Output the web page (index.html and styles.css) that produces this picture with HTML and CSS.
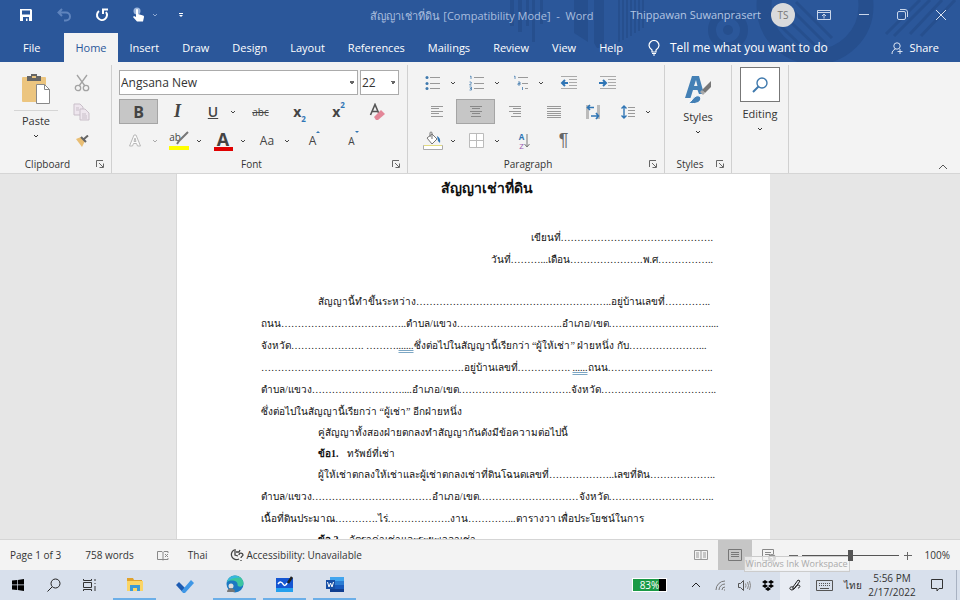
FILE: index.html
```
<!DOCTYPE html>
<html lang="en">
<head>
  <meta charset="UTF-8">
  <meta name="viewport" content="width=device-width, initial-scale=1.0">
  <title>สัญญาเช่าที่ดิน - Word</title>
  <link rel="stylesheet" href="styles.css">
</head>
<body>

  <!-- Shared icons -->
  <svg class="sprite" aria-hidden="true">
    <symbol id="chev" viewBox="0 0 8 8"><path d="M2 3l2 2 2-2" fill="none" stroke="currentColor"/></symbol>
    <symbol id="launch" viewBox="0 0 10 10"><path d="M1.500 8V1.500H8M4 4l4 4M8.500 4.500v4h-4" fill="none" stroke="#666"/></symbol>
  </svg>

  <header class="header">
    <svg class="art" width="460" height="62" viewBox="500 0 460 62" aria-hidden="true">
      <g fill="#264f8e">
        <path d="M510 0h4v26h-4zM518 0h4v32h-4zM526 0h3v26h-3zM532 0h3v42h-3zM540 0h3v24h-3zM574 0h14v42l-14-9zM594 0h10v48h-7l-3-5z"/>
        <path d="M618 0h2v42h-2zM622 0h2v40h-2zM626 0h2v38h-2zM630 0h2v36h-2zM634 0h2v33h-2zM638 0h2v31h-2zM642 0h2v28h-2z"/>
        <circle cx="728" cy="30" r="5"/>
      </g>
      <g fill="none" stroke="#264f8e">
        <circle cx="728" cy="30" r="16" stroke-width="8"/>
        <circle cx="815" cy="6" r="51" stroke-width="15"/>
        <path d="M768 14l42 40M774 6l46 44M786 4l40 40M796 2l36 36M886 34l34-34M894 36l36-36M910 34l32-34M921 36l34-36" stroke-width="3"/>
      </g>
    </svg>

    <div class="titlebar">
      <div class="quick">
        <button aria-label="Save"><svg width="14" height="14" viewBox="0 0 14 14"><path d="M1 1h11l1 1v11H1z" fill="#fff"/><path d="M3 2.500h8v4H3z" fill="#2b579a"/><path d="M4 9h6v4H8.500v-2.500H7V13H4z" fill="#2b579a"/></svg></button>
        <button aria-label="Undo"><svg width="14" height="14" viewBox="0 0 14 14" fill="none" stroke="#5f84bd" stroke-width="2"><path d="M5 1L1.500 4.500 5 8M2 4.500h7a4 4 0 010 8H7"/></svg></button>
        <button aria-label="Redo"><svg width="14" height="14" viewBox="0 0 14 14" fill="none" stroke="#fff" stroke-width="2"><path d="M4 3a5 5 0 107 1M8 6V1.500h5"/></svg></button>
        <button class="touch" aria-label="Touch mode"><svg width="14" height="15" viewBox="0 0 14 15"><circle cx="5" cy="4" r="3.500" fill="#9db6dc"/><path d="M4 3a1 1 0 012 0v4l5 1.500c1 .3 1 1 1 1.500l-1 4.500H5L1 10l1-1 2 1z" fill="#fff"/></svg><svg class="chev" width="8" height="8"><use href="#chev"/></svg></button>
        <button aria-label="Customize"><svg width="8" height="8" viewBox="0 0 8 8"><path d="M2 2.500h4" stroke="#fff"/><path d="M2 4h4L4 6z" fill="#fff"/></svg></button>
      </div>
      <h1>สัญญาเช่าที่ดิน [Compatibility Mode] &nbsp;-&nbsp; Word</h1>
      <div class="account">
        <span class="user">Thippawan Suwanprasert</span>
        <span class="avatar">TS</span>
        <button aria-label="Ribbon display"><svg width="14" height="12" viewBox="0 0 14 12" fill="none" stroke="#c9d6ea"><path d="M.5 1.500h13v9H.5zM.5 3.500h13M7 9.500V5M5 7l2-2 2 2"/></svg></button>
        <button aria-label="Minimize"><svg width="10" height="10"><path d="M0 4.500h10" stroke="#c9d6ea"/></svg></button>
        <button aria-label="Restore"><svg width="11" height="11" viewBox="0 0 11 11" fill="none" stroke="#c9d6ea"><rect x=".5" y="2.500" width="8" height="8" rx="1.500"/><path d="M3 .5h5a2.500 2.500 0 012.500 2.500v5"/></svg></button>
        <button aria-label="Close"><svg width="10" height="10"><path d="M0 0l10 10M10 0L0 10" stroke="#dbe4f2"/></svg></button>
      </div>
    </div>

    <nav class="tabs">
      <a class="file" href="#file">File</a>
      <a class="active" href="#home">Home</a>
      <a href="#insert">Insert</a>
      <a href="#draw">Draw</a>
      <a href="#design">Design</a>
      <a href="#layout">Layout</a>
      <a href="#references">References</a>
      <a href="#mailings">Mailings</a>
      <a href="#review">Review</a>
      <a href="#view">View</a>
      <a href="#help">Help</a>
      <button class="tell"><svg width="12" height="16" viewBox="0 0 12 16" fill="none" stroke="#fff" stroke-width="1.200"><path d="M4 12v-2C2 8.500 1 7.500 1 5.500a5 5 0 0110 0c0 2-1 3-3 4.500v2zM4 13.500h4M5 15h2"/></svg>Tell me what you want to do</button>
      <button class="share"><svg width="12" height="12" viewBox="0 0 12 12" fill="none" stroke="#dbe4f2"><circle cx="6" cy="4" r="3.200"/><path d="M1 12c0-3 1.500-4 3.500-5M9 7v5M6.500 9.500h5"/></svg>Share</button>
    </nav>
  </header>

  <!-- Ribbon -->
  <section class="ribbon">
    <div class="group clipboard">
      <div class="body">
        <button class="big paste">
          <svg width="30" height="32" viewBox="0 0 30 32"><rect x="1" y="4" width="24" height="25" rx="1" fill="#ecc57f"/><path d="M6 3h4V1h6v2h4v5H6z" fill="#666"/><path d="M11 3h4v2h-4z" fill="#ecc57f"/><path d="M15.500 11.500h8l5 5v14h-13z" fill="#fff" stroke="#888"/><path d="M23.500 11.500v5h5" fill="none" stroke="#888"/></svg>
          <span>Paste</span>
          <svg width="8" height="8"><use href="#chev"/></svg>
        </button>
        <div class="side">
          <button aria-label="Cut"><svg width="16" height="18" viewBox="0 0 16 18" fill="none" stroke="#a3a3a3" stroke-width="1.300"><circle cx="4" cy="14" r="2.700"/><circle cx="12" cy="14" r="2.700"/><path d="M3 1l8 11M13 1L5 12"/></svg></button>
          <button aria-label="Copy"><svg width="17" height="18" viewBox="0 0 17 18" fill="#eee6ee" stroke="#c9bfc9"><path d="M1 1h6l3 3v8H1z"/><path d="M7 6h5l4 4v7H7z"/><path d="M9 11h4M9 13h5M9 15h5M3 5h3M3 7h3" /></svg></button>
          <button aria-label="Format Painter"><svg width="14" height="12" viewBox="0 0 14 12"><path d="M1 4l5-2 4 4-3 6z" fill="#e9be74"/><path d="M6 2l5 5M9 4l4-3.500" stroke="#666" stroke-width="2"/></svg></button>
        </div>
      </div>
      <footer><span>Clipboard</span><button aria-label="Clipboard options"><svg width="10" height="10"><use href="#launch"/></svg></button></footer>
    </div>

    <div class="group font">
      <div class="body rows">
        <div class="row combos">
          <select class="family" aria-label="Font"><option>Angsana New</option></select>
          <select class="size" aria-label="Font size"><option>22</option></select>
        </div>
        <div class="row">
          <button class="bold on">B</button>
          <button class="italic">I</button>
          <button class="split under"><span>U</span><svg width="8" height="8"><use href="#chev"/></svg></button>
          <button class="strike">abc</button>
          <button class="script">x<sub>2</sub></button>
          <button class="script">x<sup>2</sup></button>
          <button class="clear" aria-label="Clear formatting"><svg width="17" height="18" viewBox="0 0 17 18"><path d="M1.500 12L6 1.500 10.500 12M3 8.500h6" fill="none" stroke="#555" stroke-width="1.600"/><path d="M5 14l7-7 4 4-7 6H7z" fill="#e38798"/></svg></button>
        </div>
        <div class="row">
          <button class="split" aria-label="Text effects"><svg width="14" height="16" viewBox="0 0 14 16" fill="#fafafa" stroke="#b9b9b9"><path d="M1.500 13L6 2h2l4.500 11h-3L8.500 10.500h-3L4.500 13zM6 8.500h2L7 5z"/></svg><svg class="dim" width="8" height="8"><use href="#chev"/></svg></button>
          <button class="split mark"><span>ab<svg width="14" height="14" viewBox="0 0 14 14"><path d="M13 1L4 10l-2 3" fill="none" stroke="#777" stroke-width="2"/></svg></span><svg width="8" height="8"><use href="#chev"/></svg></button>
          <button class="split color"><span>A</span><svg width="8" height="8"><use href="#chev"/></svg></button>
          <button class="split case"><span>Aa</span><svg width="8" height="8"><use href="#chev"/></svg></button>
          <button class="grow">A<svg width="4" height="12"><path d="M0 5l2-2 2 2z" fill="#2f75b5"/></svg></button>
          <button class="shrink">A<svg width="4" height="12"><path d="M0 3h4L2 5z" fill="#2f75b5"/></svg></button>
        </div>
      </div>
      <footer><span>Font</span><button aria-label="Font options"><svg width="10" height="10"><use href="#launch"/></svg></button></footer>
    </div>

    <div class="group paragraph">
      <div class="body rows">
        <div class="row">
          <button class="split" aria-label="Bullets"><svg width="16" height="16" viewBox="0 0 16 16"><path d="M5 2.500h10M5 8.500h10M5 13.500h10" stroke="#999"/><g fill="#3f79ad"><circle cx="2" cy="2.500" r="1.500"/><circle cx="2" cy="8.500" r="1.500"/><circle cx="2" cy="13.500" r="1.500"/></g></svg><svg width="8" height="8"><use href="#chev"/></svg></button>
          <button class="split" aria-label="Numbering"><svg width="16" height="16" viewBox="0 0 16 16"><path d="M5 2.500h10M5 8.500h10M5 13.500h10" stroke="#999"/><path d="M1 1.500l1-.5v3M.5 7H2l.5 1-2 2h2M.5 12h2v3h-2M1 13.500h1" fill="none" stroke="#3f79ad" stroke-width=".8"/></svg><svg width="8" height="8"><use href="#chev"/></svg></button>
          <button class="split" aria-label="Multilevel list"><svg width="16" height="16" viewBox="0 0 16 16"><path d="M5 2.500h10M9 8.500h6M12 13.500h3" stroke="#999"/><path d="M1 1.500l1-.5v3M5 7h2v3H5V8.500h2M9.500 12v3" fill="none" stroke="#3f79ad" stroke-width=".8"/></svg><svg width="8" height="8"><use href="#chev"/></svg></button>
          <button aria-label="Decrease indent"><svg width="17" height="14" viewBox="0 0 17 14"><path d="M1 .5h16M9 3.500h8M9 6.500h8M9 9.500h8M1 12.500h16" stroke="#aaa"/><path d="M8 7H2M5 4L2 7l3 3" fill="none" stroke="#2f75b5" stroke-width="2"/></svg></button>
          <button aria-label="Increase indent"><svg width="17" height="14" viewBox="0 0 17 14"><path d="M1 .5h16M9 3.500h8M9 6.500h8M9 9.500h8M1 12.500h16" stroke="#aaa"/><path d="M0 7h7M4 4l3 3-3 3" fill="none" stroke="#2f75b5" stroke-width="2"/></svg></button>
        </div>
        <div class="row">
          <button aria-label="Align left"><svg width="14" height="14" stroke="#999"><path d="M1 1.500h12M1 3.500h8M1 6.500h12M1 8.500h8M1 11.500h12"/></svg></button>
          <button class="on" aria-label="Center"><svg width="14" height="14" stroke="#888"><path d="M1 1.500h12M3 3.500h8M1 6.500h12M3 8.500h8M2 11.500h10"/></svg></button>
          <button aria-label="Align right"><svg width="14" height="14" stroke="#999"><path d="M1 1.500h12M5 3.500h8M1 6.500h12M5 8.500h8M3 11.500h10"/></svg></button>
          <button aria-label="Justify"><svg width="14" height="14" stroke="#999"><path d="M0 1.500h14M0 3.500h14M0 6.500h14M0 8.500h14M0 10.500h14M0 12.500h14"/></svg></button>
          <button aria-label="Distribute"><svg width="16" height="16" viewBox="0 0 16 16"><path d="M1 1h3v14H1zM12 1h3v14h-3z" fill="#bbb"/><path d="M9 3.500H3M5 1L2.500 3.500 5 6M6 12h7M11 9l2.500 3L11 15" fill="none" stroke="#2f75b5" stroke-width="1.600"/></svg></button>
          <button class="split" aria-label="Line spacing"><svg width="16" height="16" viewBox="0 0 16 16"><path d="M8 3.500h7M8 6.500h7M8 9.500h7M8 12.500h7" stroke="#999"/><path d="M4 2v12M1.500 4.500L4 2l2.500 2.500M1.500 11.500L4 14l2.500-2.500" fill="none" stroke="#2f75b5" stroke-width="1.400"/></svg><svg width="8" height="8"><use href="#chev"/></svg></button>
        </div>
        <div class="row">
          <button class="split" aria-label="Shading"><svg width="20" height="19" viewBox="0 0 20 19"><path d="M4 7l5-4 5 5-5 5zM9 8V2a1 1 0 00-2 0v4" fill="#fff" stroke="#777"/><path d="M14 5q4 2 3 7l-2-2z" fill="#2f75b5"/><path d="M.5 14.500h19v4H.5z" fill="#fff" stroke="#aaa"/><path d="M1 14.500h18" stroke="#e3dc80"/></svg><svg width="8" height="8"><use href="#chev"/></svg></button>
          <button class="split" aria-label="Borders"><svg width="16" height="16" fill="#fff" stroke="#bbb"><path d="M.5.5h14v14H.5zM7.500.5v14M.5 7.500h14"/></svg><svg width="8" height="8"><use href="#chev"/></svg></button>
          <button class="sort" aria-label="Sort"><span><b>A</b><i>Z</i></span><svg width="6" height="14"><path d="M3 0v13M.5 10L3 13l2.500-3" fill="none" stroke="#777"/></svg></button>
          <button class="pilcrow">¶</button>
        </div>
      </div>
      <footer><span>Paragraph</span><button aria-label="Paragraph options"><svg width="10" height="10"><use href="#launch"/></svg></button></footer>
    </div>

    <div class="group styles">
      <div class="body">
        <button class="big">
          <svg width="28" height="30" viewBox="0 0 28 30"><path d="M1 23L8 1h7l5 18h-5l-1.500-4H9l-2.500 8zM10 11h3.500L12 5z" fill="#4480b5"/><path d="M27 6v6l-6 6-3-3z" fill="#777"/><path d="M18 15l3 3-2 2-3-3z" fill="#aaa"/><path d="M4 28c4-1 4-5 8-7 4-1 6 2 4 5-3 3-8 3-12 2z" fill="#4480b5" stroke="#fff"/></svg>
          <span>Styles</span>
          <svg width="8" height="8"><use href="#chev"/></svg>
        </button>
      </div>
      <footer><span>Styles</span><button aria-label="Styles options"><svg width="10" height="10"><use href="#launch"/></svg></button></footer>
    </div>

    <div class="group editing">
      <div class="body">
        <button class="big">
          <span class="box"><svg width="16" height="16" viewBox="0 0 16 16" fill="none" stroke="#3f79ad"><circle cx="10" cy="6" r="5" stroke-width="1.400"/><path d="M6.500 9.500L1 15" stroke-width="2"/></svg></span>
          <span>Editing</span>
          <svg width="8" height="8"><use href="#chev"/></svg>
        </button>
      </div>
    </div>
    <button class="collapse" aria-label="Collapse ribbon"><svg width="10" height="6"><path d="M1 5l4-4 4 4" fill="none" stroke="#555"/></svg></button>
  </section>

  <!-- Document -->
  <main class="workspace">
    <article class="page" lang="th">
      <h2>สัญญาเช่าที่ดิน</h2>
      <p class="right">เขียนที่……………………………………….<br>วันที่………...เดือน………………….พ.ศ……………..</p>
      <p>&nbsp;</p>
      <p class="indent">สัญญานี้ทำขึ้นระหว่าง…………………………………………………..อยู่บ้านเลขที่…………..<br>
        ถนน………………………………..ตำบล/แขวง…………………………..อำเภอ/เขต…………………………....<br>
        จังหวัด…………………. ……….<u>......</u>ซึ่งต่อไปในสัญญานี้เรียกว่า “ผู้ให้เช่า” ฝ่ายหนึ่ง กับ…………………...<br>
        …………………………………………………….อยู่บ้านเลขที่……………. <u>......</u>ถนน…………………………..<br>
        ตำบล/แขวง………………………....อำเภอ/เขต…………………………….จังหวัด……………………………..<br>
        ซึ่งต่อไปในสัญญานี้เรียกว่า “ผู้เช่า” อีกฝ่ายหนึ่ง</p>
      <p class="indent">คู่สัญญาทั้งสองฝ่ายตกลงทำสัญญากันดังมีข้อความต่อไปนี้</p>
      <p class="indent"><b class="clause">ข้อ1.</b>ทรัพย์ที่เช่า</p>
      <p class="indent">ผู้ให้เช่าตกลงให้เช่าและผู้เช่าตกลงเช่าที่ดินโฉนดเลขที่………………..เลขที่ดิน………………..<br>
        ตำบล/แขวง………………………………อำเภอ/เขต…………………………จังหวัด…………………………..<br>
        เนื้อที่ดินประมาณ………….ไร่……………….งาน…………...ตารางวา เพื่อประโยชน์ในการ</p>
      <p class="indent"><b class="clause">ข้อ 2.</b>อัตราค่าเช่าและระยะเวลาเช่า</p>
    </article>
  </main>

  <!-- Status bar -->
  <footer class="status">
    <span class="pages">Page 1 of 3</span>
    <span class="words">758 words</span>
    <button class="proof" aria-label="Proofing"><svg width="12" height="11" viewBox="0 0 12 11" fill="none" stroke="#888"><path d="M6 9.500H.5v-8H5l1 1v8M6 2.500l1-1h4V3M6 9.500h5V8M8 4l3 3M11 4L8 7"/></svg></button>
    <span class="lang">Thai</span>
    <span class="access"><svg width="14" height="14" viewBox="0 0 14 14" fill="none" stroke="#444" stroke-width="1.300"><path d="M4 2a5 5 0 105 9M5 1v6l3 1M6 4h3l1-2"/><path d="M9 7c0-3 4-2 4 0 0 1-2 1-2 3M11 12v1"/></svg>Accessibility: Unavailable</span>
    <div class="views">
      <button aria-label="Read mode"><svg width="14" height="12" fill="none" stroke="#999"><path d="M.5 1.500h13v9H.5zM7 1v10M9 4h3M9 6h3M9 8h3M2 4h3M2 6h3M2 8h3"/></svg></button>
      <button class="current" aria-label="Print layout"><svg width="14" height="12" fill="none" stroke="#777"><path d="M.5.5h13v11H.5zM3 3.500h8M3 5.500h8M3 7.500h8"/></svg></button>
      <button aria-label="Web layout"><svg width="14" height="13" fill="none" stroke="#888"><path d="M8 11.500H.5V.5h11V5M3 3.500h6M3 5.500h5M3 7.500h3"/><circle cx="10" cy="9" r="3.500" fill="#999"/><path d="M8 8l3 1-1 2" stroke="#fff"/></svg></button>
      <span class="tip">Windows Ink Workspace</span>
    </div>
    <div class="zoom">
      <button aria-label="Zoom out"><svg width="9" height="9"><path d="M0 4.500h9" stroke="#666"/></svg></button>
      <input type="range" min="0" max="100" value="50" aria-label="Zoom">
      <button aria-label="Zoom in"><svg width="9" height="9"><path d="M1 4.500h8M4.500 1v8" stroke="#666"/></svg></button>
      <span>100%</span>
    </div>
  </footer>

  <!-- Taskbar -->
  <footer class="taskbar">
    <button aria-label="Start"><svg width="12" height="12" viewBox="0 0 12 12"><path d="M0 1.500L5 1v4.500H0zM5.700.9L12 0v5.500H5.700zM0 6.300h5V11l-5-.6zM5.700 6.300H12V12l-6.300-.9z"/></svg></button>
    <button aria-label="Search"><svg width="14" height="14" fill="none" stroke="#222"><circle cx="8.500" cy="5.500" r="4.500"/><path d="M5 9l-4.500 4.500"/></svg></button>
    <button aria-label="Task view"><svg width="14" height="12" fill="none" stroke="#333"><path d="M.5 3.500h8v5h-8zM.5 0v1.500h8V0M.5 12v-1.500h8V12M12 0v2M12 7v5M11.500 4.500h1"/></svg></button>
    <div class="apps">
      <button class="open" aria-label="File Explorer"><svg width="16" height="15" viewBox="0 0 16 15"><path d="M0 1h6l1 2h8v3H0z" fill="#e0a22c"/><path d="M0 4h16v10H0z" fill="#fbd566"/><path d="M3 14V8h10v6h-3v-3H6v3z" fill="#3c9ad6"/></svg></button>
      <button aria-label="To Do"><svg width="18" height="15" viewBox="0 0 18 15"><path d="M0 7l3-3 6 6-3 3.500z" fill="#1d5cb3"/><path d="M5.500 13L15 2l3 3-9 10H7z" fill="#3f97e6"/></svg></button>
      <button class="open" aria-label="Edge"><svg width="18" height="18" viewBox="0 0 18 18"><circle cx="9" cy="9" r="8.500" fill="#1b78c2"/><path d="M1 7C3-2 17-1 17.500 8c0 5-6 4-6 2 1-4-6-6-10.500-3z" fill="#3cc5a0"/><path d="M1 7C3 0 11-1 14 3 9 2 4 4 1 7z" fill="#35b6df"/><circle cx="5" cy="11" r="2.500" fill="#ddd"/><path d="M1 17c0-5 8-5 8 0z" fill="#777"/></svg></button>
      <button class="open" aria-label="Whiteboard"><svg width="19" height="17" viewBox="0 0 19 17"><path d="M1 2h17v14H1z" fill="#1556d2"/><path d="M1 12h17v4H1z" fill="#24a0ee"/><path d="M3 8c2-3 4-2 5 0s3 2 4-1" fill="none" stroke="#fff" stroke-width="1.500"/><path d="M17 1l-4 6" stroke="#222" stroke-width="2.500"/></svg></button>
      <button class="open" aria-label="Word"><svg width="19" height="17" viewBox="0 0 19 17"><path d="M5 1h14v4H5z" fill="#41a5ee"/><path d="M5 5h14v4H5z" fill="#2b7cd3"/><path d="M5 9h14v4H5z" fill="#185abd"/><path d="M5 13h14v3H5z" fill="#103f91"/><path d="M1 4h9v9H1z" fill="#174fa5"/><path d="M2.500 6l1.500 5 1.500-4L7 11l1.500-5" fill="none" stroke="#fff"/></svg></button>
    </div>
    <div class="tray">
      <span class="battery">83%</span>
      <button aria-label="Hidden icons"><svg width="10" height="6"><path d="M1 5l4-4 4 4" fill="none" stroke="#222"/></svg></button>
      <button aria-label="Wi-Fi"><svg width="11" height="11" fill="none" stroke="#777"><path d="M1 10A9 9 0 0110 1M4 10a6 6 0 016-6M7 10a3 3 0 013-3M9 10h1"/></svg></button>
      <button aria-label="Volume"><svg width="13" height="11" fill="none" stroke="#555"><path d="M.5 3.500h2l3-3v10l-3-3h-2z"/><path d="M7.500 3.500q1 2 0 4M9.500 2q2 3.500 0 7M11.500 1q2 4.500 0 9" stroke="#888"/></svg></button>
      <button aria-label="Dropbox"><svg width="12" height="11" viewBox="0 0 12 11"><path d="M3 0l3 2-3 2-3-2zM9 0l3 2-3 2-3-2zM3 4l3 2-3 2-3-2zM9 4l3 2-3 2-3-2zM6 7l3 2-3 2-3-2z"/></svg></button>
      <button class="pen" aria-label="Windows Ink"><svg width="12" height="12" fill="none" stroke="#222"><path d="M4 8l5-7 2 1-5 7-2 1zM4 8C0 7 0 11 3 11s3-5 6-5 2 3 0 3"/></svg></button>
      <button class="keyboard" aria-label="Keyboard"><svg width="18" height="11" fill="none" stroke="#555"><path d="M.5.5h16v10H.5z"/><path d="M3 3.500h11M3 5.500h11" stroke-dasharray="1 1"/><path d="M4 8.500h9"/></svg></button>
      <button class="input" lang="th">ไทย</button>
      <time>5:56 PM<br>2/17/2022</time>
      <button class="notes" aria-label="Notifications"><svg width="12" height="13" fill="none" stroke="#333"><path d="M.5.500h11v9H8l-2 2.500V9.500H.5z"/></svg></button>
    </div>
  </footer>

</body>
</html>
```
FILE: styles.css
```
* {
  box-sizing: border-box;
}

body {
  display: flex;
  flex-direction: column;
  height: 100vh;
  margin: 0;
  overflow: hidden;
  font-family: "Open Sans", "Noto Sans", sans-serif;
  font-size: 11px;
  color: #333;
}

button {
  display: flex;
  align-items: center;
  justify-content: center;
  margin: 0;
  padding: 0;
  border: 0;
  background: none;
  color: inherit;
  font: inherit;
}

svg {
  flex: none;
}

.sprite {
  position: absolute;
  width: 0;
  height: 0;
}

/* Header */
.header {
  position: relative;
  flex: none;
  background: #2b579a;
  color: #fff;
}

.art {
  position: absolute;
  top: 0;
  right: 0;
}

.titlebar {
  position: relative;
  display: grid;
  grid-template-columns: 1fr auto 1fr;
  align-items: center;
  height: 29px;
  padding: 0 14px 0 18px;
}

.quick {
  display: flex;
  align-items: center;
  gap: 22px;
}

.quick button {
  min-width: 16px;
}

.quick .touch {
  gap: 5px;
  margin-right: -8px;
}

.touch .chev {
  color: #8fa9d2;
}

.titlebar h1 {
  margin: 0;
  padding-top: 2px;
  color: #a9bedf;
  font-size: 11px;
  font-weight: normal;
}

.account {
  display: flex;
  align-items: center;
  justify-content: flex-end;
  gap: 28px;
}

.user {
  margin-right: -18px;
  color: #b4c6e3;
  font-size: 11px;
  white-space: nowrap;
}

.avatar {
  width: 24px;
  height: 24px;
  margin-right: -6px;
  border-radius: 50%;
  background: #d9dadc;
  color: #777;
  font-size: 10px;
  line-height: 24px;
  text-align: center;
}

.tabs {
  position: relative;
  display: flex;
  height: 33px;
  padding-top: 4px;
}

.tabs a {
  padding: 0 11px 0 12px;
  color: #fff;
  line-height: 29px;
  text-decoration: none;
}

.tabs .file {
  padding: 0 24px 0 23px;
}

.tabs .active {
  padding: 0 11px;
  background: #f3f3f3;
  color: #2b579a;
}

.tell {
  gap: 10px;
  margin-left: 14px;
  font-size: 12px;
}

.share {
  gap: 6px;
  margin-left: auto;
  margin-right: 21px;
}

/* Ribbon */
.ribbon {
  display: flex;
  flex: none;
  height: 112px;
  padding: 3px 0 0;
  border-bottom: 1px solid #d5d5d5;
  background: #f3f3f3;
}

.group {
  display: flex;
  flex-direction: column;
  border-right: 1px solid #d0d0d0;
}

.body {
  display: flex;
  flex: 1;
  padding: 3px 8px 0;
}

.group footer {
  display: flex;
  align-items: center;
  height: 18px;
  padding-left: 6px;
  font-size: 10px;
}

.group footer span {
  flex: 1;
  text-align: center;
}

.group footer button {
  width: 22px;
}

.big {
  flex-direction: column;
  justify-content: flex-start;
  align-self: flex-start;
}

.big > svg:last-child {
  margin-top: 4px;
}

.clipboard {
  width: 112px;
}

.clipboard .body {
  padding-left: 14px;
}

.paste {
  width: 44px;
  padding-top: 5px;
}

.paste span {
  width: 44px;
  margin-top: 5px;
  padding-top: 2px;
  border-top: 1px solid #d5d5d5;
}

.side {
  display: grid;
  grid-template-rows: repeat(3, 29px);
  margin-left: 15px;
}

.rows {
  flex-direction: column;
}

.row {
  display: flex;
  height: 29px;
  align-items: center;
  color: #444;
}

.row button {
  width: 39px;
  height: 25px;
}

.row .split {
  justify-content: flex-end;
  width: 44px;
  padding-right: 4px;
}

.split > :first-child {
  margin: 0 auto;
}

.row .on {
  border: 1px solid #a5a5a5;
  background: #c6c6c6;
}

.dim {
  color: #aaa;
}

.font {
  width: 296px;
}

.font .body {
  padding: 3px 8px 0 7px;
}

.combos {
  gap: 2px;
}

.combos select {
  height: 25px;
  padding: 0 1px;
  border: 1px solid #ababab;
  border-radius: 0;
  appearance: none;
  background:
    linear-gradient(45deg, transparent 50%, #666 50%) no-repeat right 5px center / 3px 3px,
    linear-gradient(-45deg, transparent 50%, #666 50%) no-repeat right 2px center / 3px 3px,
    #fff;
  color: #333;
  font: inherit;
  font-size: 12px;
}

.combos .family {
  flex: 1;
}

.combos .size {
  width: 39px;
}

.bold {
  font-size: 16px;
  font-weight: bold;
}

.row .italic {
  font-family: "Liberation Serif", serif;
  font-size: 18px;
  font-style: italic;
  font-weight: bold;
}

.under span {
  font-size: 14px;
  font-weight: 600;
  text-decoration: underline;
}

.strike {
  font-size: 10px;
  text-decoration: line-through;
}

.script {
  font-size: 14px;
  font-weight: bold;
}

.script sub,
.script sup {
  color: #2f75b5;
  font-size: 8px;
}

.script sub {
  align-self: flex-end;
}

.script sup {
  align-self: flex-start;
}

.mark > span {
  display: flex;
  height: 19px;
  border-bottom: 4px solid #ff0;
  font-size: 10px;
  line-height: 12px;
}

.mark span svg {
  margin-left: -6px;
}

.color > span {
  width: 19px;
  border-bottom: 4px solid #e00000;
  font-size: 18px;
  font-weight: bold;
  line-height: 16px;
}

.case,
.grow {
  font-size: 12px;
}

.shrink {
  font-size: 10px;
}

.grow svg,
.shrink svg {
  align-self: flex-start;
}

.paragraph {
  width: 257px;
}

.paragraph .body {
  padding-left: 9px;
}

.sort span {
  display: grid;
  grid-template-rows: 9px 9px;
  font-size: 8px;
  line-height: 9px;
}

.sort b {
  color: #2f75b5;
}

.sort i {
  color: #9b59b0;
  font-style: normal;
}

.row .pilcrow {
  color: #666;
  font-family: "Liberation Sans", sans-serif;
  font-size: 18px;
}

.styles {
  width: 67px;
}

.styles .body {
  justify-content: center;
  padding-top: 10px;
}

.styles .big span {
  margin-top: 4px;
}

.editing {
  width: 57px;
}

.editing .body {
  justify-content: center;
  padding-top: 2px;
}

.box {
  display: flex;
  align-items: center;
  justify-content: center;
  width: 40px;
  height: 35px;
  margin-bottom: 4px;
  border: 1px solid #777;
  background: #fff;
}

.collapse {
  align-self: flex-end;
  width: 10px;
  height: 12px;
  margin-left: auto;
  margin-right: 12px;
}

/* Document */
.workspace {
  display: flex;
  flex: 1;
  justify-content: center;
  min-height: 0;
  padding-right: 14px;
  overflow: hidden;
  background: #e6e6e6;
}

.page {
  width: 100%;
  max-width: 594px;
  padding: 0 57px 0 84px;
  border-left: 1px solid #d8d8d8;
  background: #fff;
  color: #111;
  font-family: "Liberation Serif", serif;
  font-size: 10px;
  white-space: nowrap;
}

.page h2 {
  margin: 0 0 23px;
  font-size: 14px;
  line-height: 30px;
  text-align: center;
}

.page p {
  margin: 0 0 -1px;
  line-height: 22px;
}

.page .right {
  text-align: right;
}

.indent {
  text-indent: 57px;
}

.clause {
  margin-right: 8px;
}

.page u {
  text-decoration: underline double #7da7c4;
}

/* Status bar */
.status {
  display: flex;
  flex: none;
  align-items: center;
  height: 31px;
  padding: 0 10px;
  border-top: 1px solid #d5d5d5;
  background: #f3f3f3;
  font-size: 10px;
}

.words {
  margin-left: 24px;
}

.proof {
  margin: 0 19px 0 23px;
}

.access {
  display: flex;
  align-items: center;
  gap: 2px;
  margin-left: 23px;
}

.views {
  position: relative;
  display: flex;
  align-self: stretch;
  margin-left: auto;
}

.views button {
  width: 34px;
}

.views .current {
  background: #c6c6c6;
}

.tip {
  position: absolute;
  top: 16px;
  left: 60px;
  padding: 0 1px;
  border: 1px solid #ccc;
  background: rgba(245, 245, 245, 0.7);
  color: #aaa;
  font-size: 9px;
  line-height: 14px;
  white-space: nowrap;
}

.zoom {
  position: relative;
  display: flex;
  align-items: center;
  gap: 4px;
  margin-left: 3px;
}

.zoom input {
  width: 97px;
  height: 13px;
  margin: 0;
  appearance: none;
  background: linear-gradient(#555, #555) no-repeat center / 100% 1px;
}

.zoom input::-webkit-slider-thumb {
  width: 5px;
  height: 11px;
  appearance: none;
  background: #555;
}

.zoom span {
  margin-left: 9px;
}

/* Taskbar */
.taskbar {
  display: flex;
  flex: none;
  height: 30px;
  background: #d8e0ec;
  font-size: 10px;
}

.taskbar > button {
  width: 36px;
}

.apps {
  display: flex;
  gap: 7px;
  margin-left: 5px;
}

.apps button {
  width: 43px;
}

.apps .open {
  border-bottom: 2px solid #6cafe8;
}

.tray {
  display: flex;
  align-items: center;
  margin-left: auto;
  margin-right: 3px;
  border-right: 1px solid #a8b2c2;
}

.tray button {
  width: 24px;
  height: 30px;
}

.battery {
  width: 35px;
  margin-right: 17px;
  border: 1px solid #fff;
  background: linear-gradient(90deg, #1a9a46 80%, #000 80%);
  color: #fff;
  line-height: 12px;
  text-align: center;
}

.tray .pen {
  width: 30px;
  background: #e8ecf3;
}

.tray .input {
  width: 26px;
}

.tray .keyboard {
  width: 30px;
}

.tray time {
  width: 52px;
  line-height: 14px;
  text-align: center;
}

.tray .notes {
  width: 38px;
}
```
